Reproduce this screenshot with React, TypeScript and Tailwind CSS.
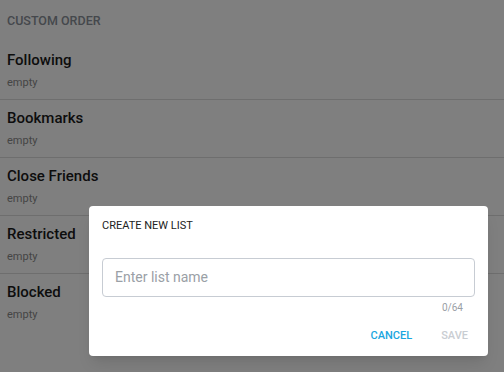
const lists = ["Following", "Bookmarks", "Close Friends", "Restricted", "Blocked"]

export default function App() {
  return (
    <div className="relative h-[372px] w-[504px] overflow-hidden bg-white" style={{ fontFamily: "Roboto, sans-serif" }}>
      <div className="px-[7px] pt-[12px] pb-[12px] text-[12.5px] leading-[18px] font-medium text-[#8a9099]">CUSTOM ORDER</div>
      <div>
        {lists.map((name, i) => (
          <div
            key={name}
            className={`px-[7px] pt-[7px] pb-[8px] ${i < lists.length - 1 ? "border-b border-[#dcdcdc]" : ""}`}
          >
            <div className="text-[15px] leading-[22px] font-medium text-[#1a1a1a]">{name}</div>
            <div className="mt-[4px] text-[11px] leading-[16px] text-[#8a8a8a]">empty</div>
          </div>
        ))}
      </div>

      <div className="absolute inset-0 bg-black/50" />

      <div className="absolute left-[89px] top-[206px] w-[399px] rounded-[4px] bg-white px-[13px] pt-[13px] pb-[13px] shadow-lg">
        <div className="text-[11px] leading-[14px] text-[#222]">CREATE NEW LIST</div>
        <div className="mt-[25px] flex h-[39px] items-center rounded-[4px] border border-[#c7ccd3] px-[12px] text-[14px] text-[#9aa0a6]">
          Enter list name
        </div>
        <div className="mt-[4px] pr-[12px] text-right text-[10px] leading-[14px] text-[#9aa0a6]">0/64</div>
        <div className="mt-[14px] flex justify-end gap-[29px] pr-[7px] text-[11px] font-medium leading-[14px]">
          <span className="text-[#1aa6e0]">CANCEL</span>
          <span className="text-[#c9cdd2]">SAVE</span>
        </div>
      </div>
    </div>
  )
}
